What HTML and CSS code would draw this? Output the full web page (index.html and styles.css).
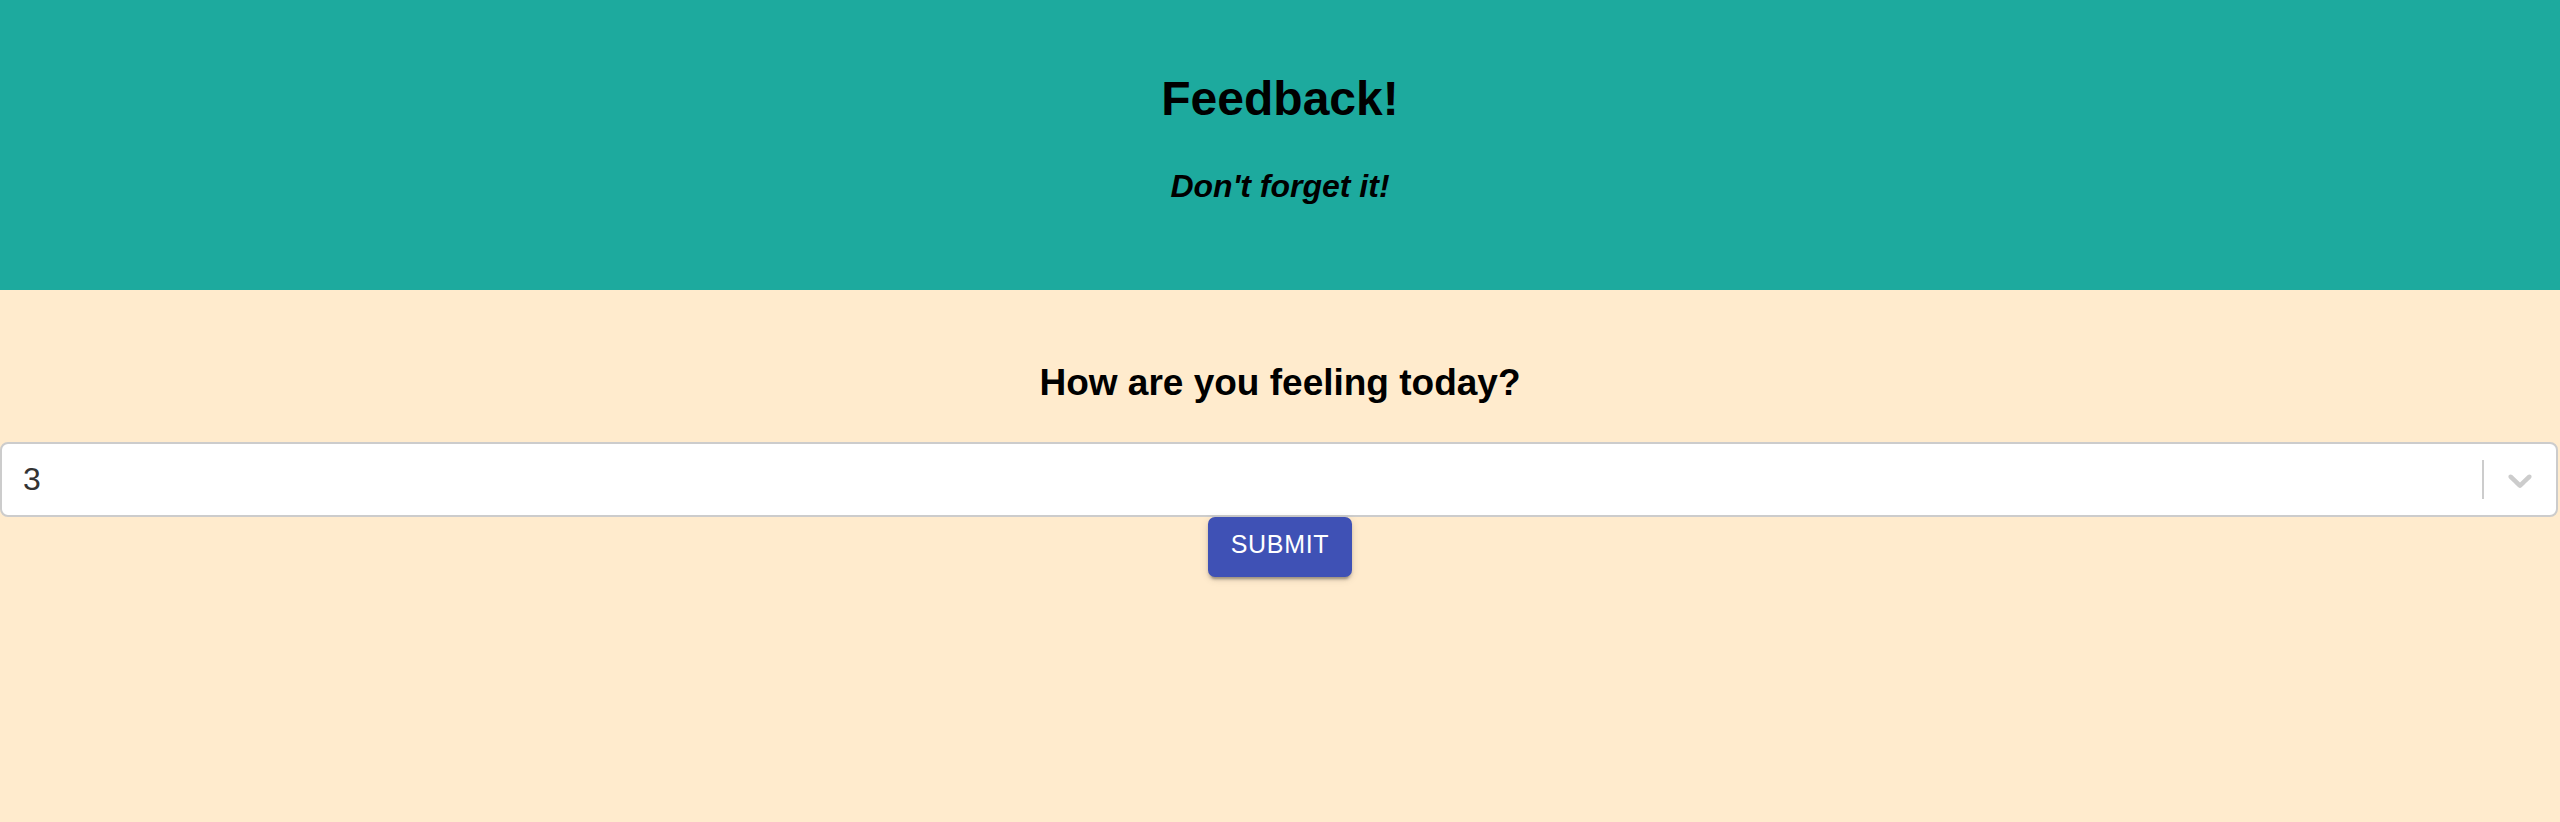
FILE: index.html
```html
<!DOCTYPE html>
<html lang="en">
<head>
<meta charset="utf-8">
<title>Feedback</title>
<link rel="stylesheet" href="styles.css">
</head>
<body>
<header class="hero">
  <h1 class="hero-title">Feedback!</h1>
  <h3 class="hero-sub">Don't forget it!</h3>
</header>
<main class="content">
  <h2 class="question">How are you feeling today?</h2>
  <div class="select">
    <div class="select-value">3</div>
    <div class="select-indicators">
      <span class="select-sep"></span>
      <span class="select-arrow">
        <svg width="40" height="40" viewBox="0 0 20 20" aria-hidden="true"><path fill="#cccccc" d="M4.516 7.548c0.436-0.446 1.043-0.481 1.576 0l3.908 3.747 3.908-3.747c0.533-0.481 1.141-0.446 1.574 0 0.436 0.445 0.408 1.197 0 1.615-0.406 0.418-4.695 4.502-4.695 4.502-0.217 0.223-0.502 0.335-0.787 0.335s-0.57-0.112-0.789-0.335c0 0-4.287-4.084-4.695-4.502s-0.436-1.17 0-1.615z"/></svg>
      </span>
    </div>
  </div>
  <button class="submit" type="button">Submit</button>
</main>
</body>
</html>
```
FILE: styles.css
```css
html, body {
  margin: 0;
  padding: 0;
}
body {
  background: #ffebcd;
  font-family: "Liberation Sans", Arial, Helvetica, sans-serif;
  color: #000;
  min-height: 822px;
}
.hero {
  background: #1daa9e;
  height: 290px;
  box-sizing: border-box;
  padding-top: 71px;
  display: flex;
  flex-direction: column;
  align-items: center;
}
.hero-title {
  margin: 0;
  font-size: 48px;
  line-height: 55px;
  font-weight: bold;
}
.hero-sub {
  margin: 42px 0 0;
  font-size: 32px;
  line-height: 37px;
  font-weight: bold;
  font-style: italic;
}
.content {
  display: flex;
  flex-direction: column;
  align-items: center;
  padding-top: 71px;
}
.question {
  margin: 0;
  font-size: 37px;
  line-height: 43px;
  font-weight: bold;
}
.select {
  margin-top: 38px;
  align-self: stretch;
  margin-right: 2px;
  height: 75px;
  box-sizing: border-box;
  background: #fff;
  border: 2px solid #cccccc;
  border-radius: 8px;
  display: flex;
  align-items: center;
}
.select-value {
  flex: 1;
  padding-left: 21px;
  font-size: 32px;
  color: #333333;
}
.select-indicators {
  display: flex;
  align-items: center;
  align-self: stretch;
}
.select-sep {
  width: 2px;
  height: 39px;
  background: #cccccc;
}
.select-arrow {
  display: flex;
  padding: 0 16px;
}
.submit {
  margin-top: 0;
  width: 144px;
  height: 60px;
  border: none;
  border-radius: 7px;
  background: #3f51b5;
  color: #fff;
  font-family: "Liberation Sans", Arial, Helvetica, sans-serif;
  font-size: 25px;
  letter-spacing: 0.7px;
  text-transform: uppercase;
  padding: 0 0 6px;
  box-shadow: 0 5px 2px -3px rgba(0,0,0,0.2), 0 3px 3px 0 rgba(0,0,0,0.14), 0 2px 8px 0 rgba(0,0,0,0.12);
}
```
